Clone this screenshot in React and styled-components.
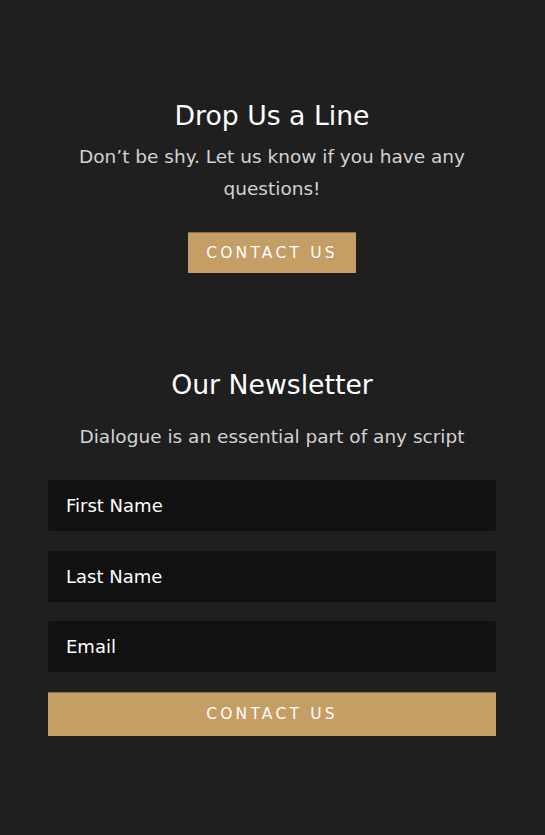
import styled, { createGlobalStyle } from "styled-components";

const GlobalStyle = createGlobalStyle`
  html, body {
    margin: 0;
    padding: 0;
    background: #1f1f1f;
  }
  body {
    font-family: "DejaVu Sans", "Noto Sans", sans-serif;
  }
  * {
    box-sizing: border-box;
  }
`;

const Page = styled.main`
  min-height: 835px;
  background: #1f1f1f;
  padding: 100px 0 0 48px;
  display: flex;
  flex-direction: column;
  align-items: flex-start;
`;

const Section = styled.section`
  width: 448px;
  display: flex;
  flex-direction: column;
  align-items: center;
  text-align: center;
  margin-bottom: ${({ $gap }) => $gap || 0}px;
`;

const Title = styled.h2`
  margin: 0;
  font-size: 26.7px;
  line-height: 31px;
  font-weight: 400;
  color: #ffffff;
`;

const Lead = styled.p`
  margin: ${({ $top }) => $top}px 0 0;
  max-width: 400px;
  font-size: 18.5px;
  line-height: 32px;
  color: #d2d2d2;
`;

const GoldButton = styled.button`
  margin-top: 27px;
  width: ${({ $full }) => ($full ? "100%" : "168px")};
  height: ${({ $full }) => ($full ? "44px" : "41px")};
  border: none;
  border-top: 1px solid #8c6f45;
  background: #c49e64;
  color: #ffffff;
  font-family: inherit;
  font-size: 15.5px;
  letter-spacing: 3.2px;
  text-transform: uppercase;
  cursor: pointer;
`;

const Form = styled.form`
  width: 100%;
  margin-top: 27px;
  display: flex;
  flex-direction: column;
  gap: 19.5px;
`;

const Field = styled.input`
  width: 100%;
  height: 51px;
  border: none;
  border-radius: 3px;
  background: #111111;
  padding: 0 18px;
  font-family: inherit;
  font-size: 18px;
  color: #ffffff;
  outline: none;

  &::placeholder {
    color: #ffffff;
    opacity: 1;
  }
`;

const SubmitButton = styled(GoldButton)`
  margin-top: 0;
`;

export default function App() {
  return (
    <>
      <GlobalStyle />
      <Page>
        <Section $gap={96}>
          <Title>Drop Us a Line</Title>
          <Lead $top={10}>
            Don’t be shy. Let us know if you have any questions!
          </Lead>
          <GoldButton type="button">Contact Us</GoldButton>
        </Section>

        <Section>
          <Title>Our Newsletter</Title>
          <Lead $top={21}>Dialogue is an essential part of any script</Lead>
          <Form onSubmit={(e) => e.preventDefault()}>
            <Field type="text" placeholder="First Name" />
            <Field type="text" placeholder="Last Name" />
            <Field type="email" placeholder="Email" />
            <SubmitButton type="submit" $full>
              Contact Us
            </SubmitButton>
          </Form>
        </Section>
      </Page>
    </>
  );
}
